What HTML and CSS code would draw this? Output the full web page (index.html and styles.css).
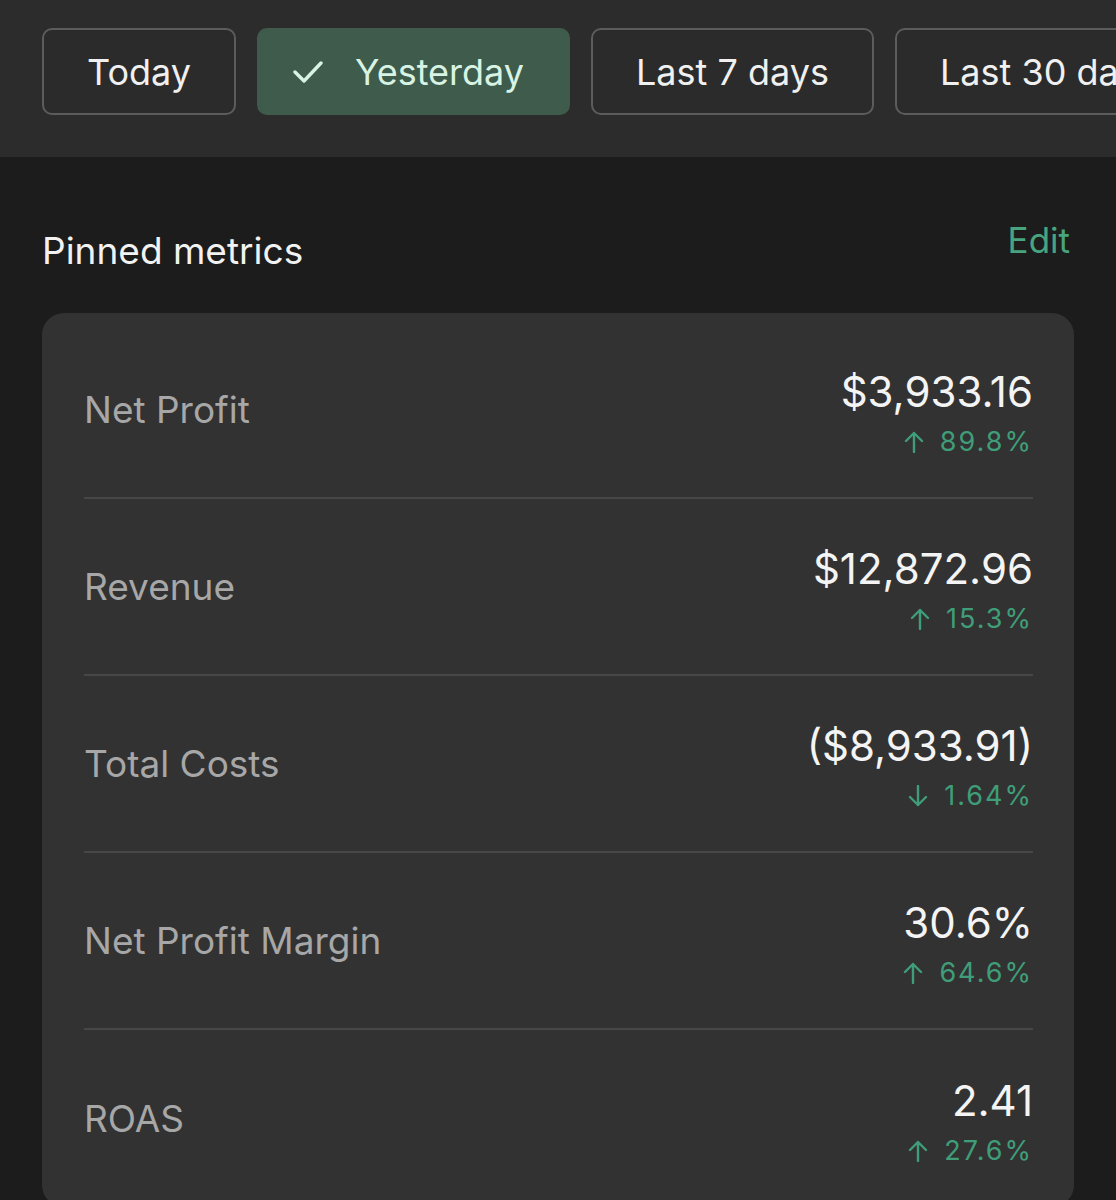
FILE: index.html
```html
<!DOCTYPE html>
<html lang="en">
<head>
    <meta charset="UTF-8">
    <meta name="viewport" content="width=device-width, initial-scale=1.0">
    <title>Pinned metrics</title>
    <link rel="stylesheet" href="styles.css">
</head>
<body>

    <div class="range-bar">
        <button class="range-btn">Today</button>
        <button class="range-btn active">
            <svg class="check" viewBox="0 0 30 22" width="30" height="22">
                <path d="M2 11 L11 20 L28 2" fill="none" stroke="currentColor" stroke-width="3.4" stroke-linecap="round" stroke-linejoin="round"/>
            </svg>
            Yesterday
        </button>
        <button class="range-btn">Last 7 days</button>
        <button class="range-btn">Last 30 days</button>
    </div>

    <main class="content">
        <div class="section-head">
            <h2>Pinned metrics</h2>
            <a class="edit" href="#">Edit</a>
        </div>

        <div class="card">
            <div class="metric">
                <span class="label">Net Profit</span>
                <div class="figures">
                    <div class="value">$3,933.16</div>
                    <div class="change"><svg class="arrow" viewBox="0 0 22 22" width="22" height="22"><path d="M11 21 V2 M3 10 L11 2 L19 10" fill="none" stroke="currentColor" stroke-width="2.4" stroke-linecap="round" stroke-linejoin="round"/></svg>89.8%</div>
                </div>
            </div>
            <div class="metric">
                <span class="label">Revenue</span>
                <div class="figures">
                    <div class="value">$12,872.96</div>
                    <div class="change"><svg class="arrow" viewBox="0 0 22 22" width="22" height="22"><path d="M11 21 V2 M3 10 L11 2 L19 10" fill="none" stroke="currentColor" stroke-width="2.4" stroke-linecap="round" stroke-linejoin="round"/></svg>15.3%</div>
                </div>
            </div>
            <div class="metric">
                <span class="label">Total Costs</span>
                <div class="figures">
                    <div class="value">($8,933.91)</div>
                    <div class="change"><svg class="arrow" viewBox="0 0 22 22" width="22" height="22"><path d="M11 1 V20 M3 12 L11 20 L19 12" fill="none" stroke="currentColor" stroke-width="2.4" stroke-linecap="round" stroke-linejoin="round"/></svg>1.64%</div>
                </div>
            </div>
            <div class="metric">
                <span class="label">Net Profit Margin</span>
                <div class="figures">
                    <div class="value">30.6%</div>
                    <div class="change"><svg class="arrow" viewBox="0 0 22 22" width="22" height="22"><path d="M11 21 V2 M3 10 L11 2 L19 10" fill="none" stroke="currentColor" stroke-width="2.4" stroke-linecap="round" stroke-linejoin="round"/></svg>64.6%</div>
                </div>
            </div>
            <div class="metric">
                <span class="label">ROAS</span>
                <div class="figures">
                    <div class="value">2.41</div>
                    <div class="change"><svg class="arrow" viewBox="0 0 22 22" width="22" height="22"><path d="M11 21 V2 M3 10 L11 2 L19 10" fill="none" stroke="currentColor" stroke-width="2.4" stroke-linecap="round" stroke-linejoin="round"/></svg>27.6%</div>
                </div>
            </div>
        </div>
    </main>

</body>
</html>
```

FILE: styles.css
```css
body {
    margin: 0;
    background-color: #1c1c1c;
    font-family: Inter, 'Noto Sans', sans-serif;
    color: #f2f2f2;
    overflow: hidden;
}

.range-bar {
    display: flex;
    gap: 21px;
    padding: 28px 0 42px 42px;
    background-color: #2c2c2c;
    white-space: nowrap;
    overflow: hidden;
}

.range-btn {
    flex-shrink: 0;
    display: flex;
    align-items: center;
    gap: 32px;
    height: 87px;
    padding: 0 43px;
    font-family: inherit;
    font-size: 36px;
    color: #f0f0f0;
    background-color: #2b2b2b;
    border: 2px solid #5c5c5c;
    border-radius: 10px;
}

.range-btn.active {
    background-color: #3e5b4b;
    border-color: #3e5b4b;
    color: #d8f3e4;
    padding: 0 44px 0 34px;
}

.check {
    display: block;
}

.content {
    padding: 0 42px;
}

.section-head {
    display: flex;
    justify-content: space-between;
    align-items: flex-start;
    margin-top: 72px;
}

.section-head h2 {
    margin: 0;
    font-size: 37px;
    font-weight: 400;
    line-height: 44px;
    color: #f2f2f2;
}

.edit {
    margin: -11px 4px 0 0;
    font-size: 35px;
    line-height: 44px;
    color: #47a47f;
    text-decoration: none;
}

.card {
    margin-top: 40px;
    padding: 9px 41px 0 42px;
    background-color: #323232;
    border-radius: 22px;
}

.metric {
    display: flex;
    justify-content: space-between;
    align-items: center;
    box-sizing: border-box;
    height: 177px;
    border-bottom: 2px solid #474747;
}

.metric:last-child {
    border-bottom: none;
}

.label {
    font-size: 37px;
    color: #a7a7a7;
}

.figures {
    display: flex;
    flex-direction: column;
    align-items: flex-end;
    margin-top: 8px;
}

.value {
    font-size: 42px;
    line-height: 48px;
    color: #f4f4f4;
}

.change {
    display: flex;
    align-items: center;
    gap: 15px;
    margin-top: 8px;
    font-size: 27px;
    line-height: 36px;
    letter-spacing: 2px;
    color: #3f9e79;
}

.arrow {
    display: block;
}
```
